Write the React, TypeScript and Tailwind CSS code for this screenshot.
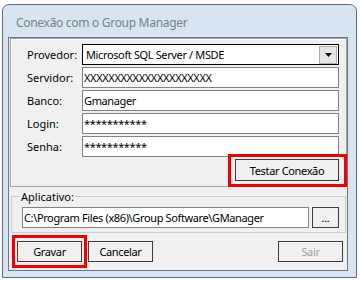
import React from "react";

// Janela "Conexão com o Group Manager" (estilo Windows 7 básico)
const txt = "font-['Noto_Sans',sans-serif] text-[11px] leading-[13px] text-black";

const Btn = ({
  label,
  disabled,
  className = "",
}: {
  label: string;
  disabled?: boolean;
  className?: string;
}) => (
  <div
    className={`h-[21px] border border-[#3c3c3c] bg-[#f0f0f0] flex items-center justify-center ${className}`}
  >
    <span className={`tracking-[-0.35px] ${disabled ? "text-[#a0a0a0]" : "text-black"}`}>{label}</span>
  </div>
);

const Row = ({ label, children }: { label: string; children: React.ReactNode }) => (
  <div className="flex items-center h-[21px]">
    <span className="w-[55px]">{label}</span>
    {children}
  </div>
);

const TextBox = ({ value }: { value: string }) => (
  <div className="w-[257px] h-[21px] border border-[#828282] bg-white flex items-center pl-[1px]">
    <span className="whitespace-nowrap tracking-[-0.37px]">{value}</span>
  </div>
);

export default function App() {
  return (
    <div className={`w-[360px] h-[281px] bg-white pl-[2px] pt-[4px] overflow-hidden ${txt}`}>
      {/* moldura da janela */}
      <div className="w-[355px] h-[274px] rounded-t-[7px] border border-[#5d6b7c] bg-[#d8e4f1] flex flex-col pl-[5px] pr-[8px]">
        {/* barra de título */}
        <div className="h-[32px] flex items-center pl-[8px] pt-[2px]">
          <span className="text-[12px] tracking-[-0.3px] text-[#7c8086]">Conexão com o Group Manager</span>
        </div>

        {/* área cliente */}
        <div className="w-[340px] h-[234px] border border-[#6b7785] bg-[#f0f0f0] flex flex-col">
          {/* painel de conexão */}
          <div className="ml-[1px] w-[337px] h-[149px] border border-[#a0a0a0] shadow-[inset_1px_1px_0_#ffffff] pl-[16px] pr-[6px] pt-[5px] flex flex-col gap-[2px]">
            <Row label="Provedor:">
              <div className="w-[257px] h-[21px] border border-black bg-white flex items-center">
                <span className="flex-1 pl-[3px] whitespace-nowrap tracking-[-0.37px]">Microsoft SQL Server / MSDE</span>
                <div className="w-[18px] h-[18px] mr-[1px] bg-[#e6e6e6] border border-[#adadad] flex items-center justify-center">
                  <svg width="7" height="4" viewBox="0 0 7 4">
                    <path d="M0 0H7L3.5 4Z" fill="#000" />
                  </svg>
                </div>
              </div>
            </Row>
            <Row label="Servidor:">
              <TextBox value="XXXXXXXXXXXXXXXXXXXXX" />
            </Row>
            <Row label="Banco:">
              <TextBox value="Gmanager" />
            </Row>
            <Row label="Login:">
              <TextBox value="***********" />
            </Row>
            <Row label="Senha:">
              <TextBox value="***********" />
            </Row>
            <div className="flex justify-end pr-[1px]">
              <div className="relative">
                <Btn label="Testar Conexão" className="w-[104px] h-[22px]" />
                <div className="absolute -left-[7px] -top-[5px] -right-[8px] -bottom-[6px] border-[3px] border-[#f00000]" />
              </div>
            </div>
          </div>

          {/* aplicativo */}
          <fieldset className="ml-[2px] mt-[3px] w-[335px] border border-[#c8cdd2]">
            <legend className="ml-[8px] px-[1px] leading-[13px]">Aplicativo:</legend>
            <div className="flex items-center gap-[3px] pl-[10px] pt-[4px] pb-[4px]">
              <div className="w-[287px] h-[21px] border border-[#828282] bg-white flex items-center pl-[1px]">
                <span className="whitespace-nowrap tracking-[-0.37px]">C:\Program Files (x86)\Group Software\GManager</span>
              </div>
              <Btn label="..." className="w-[27px]" />
            </div>
          </fieldset>

          {/* botões */}
          <div className="flex items-center mt-[8px] pl-[8px] pr-[4px]">
            <div className="relative">
              <Btn label="Gravar" className="w-[65px]" />
              <div className="absolute -left-[5px] -top-[6px] -right-[5px] -bottom-[6px] border-[3px] border-[#f00000]" />
            </div>
            <Btn label="Cancelar" className="w-[65px] ml-[6px]" />
            <div className="flex-1" />
            <Btn label="Sair" disabled className="w-[65px]" />
          </div>
        </div>
      </div>
    </div>
  );
}
